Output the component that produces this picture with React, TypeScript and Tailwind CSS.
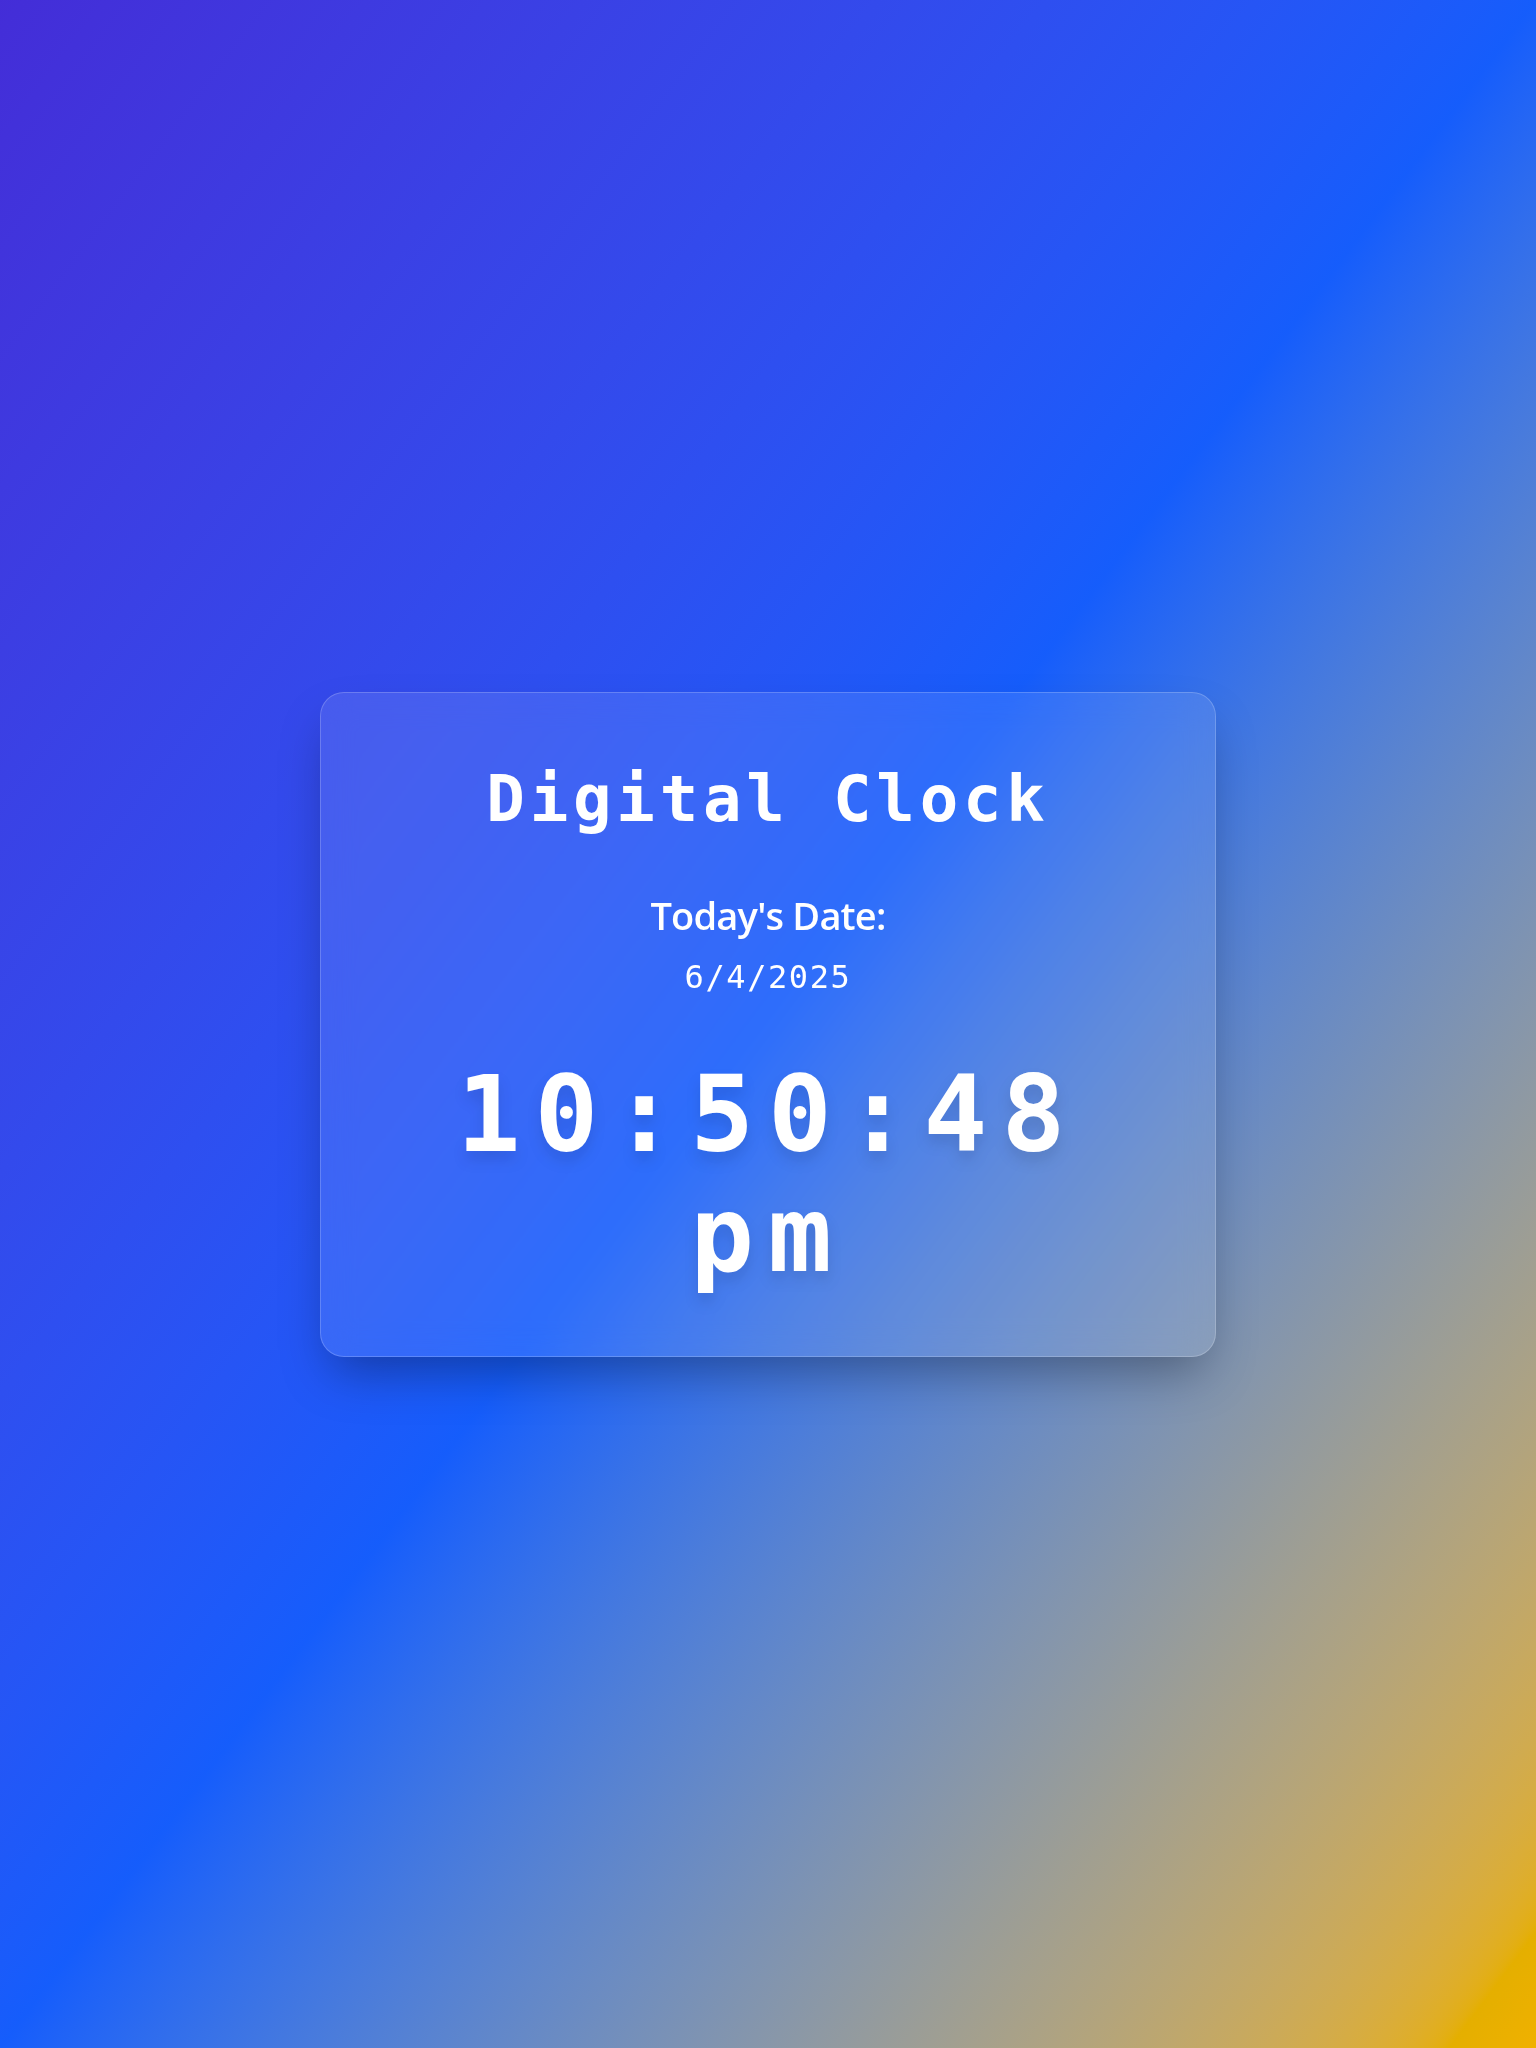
import { useEffect, useState } from "react";

const mono = "font-['DejaVu_Sans_Mono',monospace]";

function formatTime(d: Date) {
  return d
    .toLocaleTimeString("en-US", {
      hour: "2-digit",
      minute: "2-digit",
      second: "2-digit",
      hour12: true,
    })
    .toLowerCase();
}

export default function App() {
  // frozen at the moment of the screenshot
  const [now] = useState(() => new Date(2025, 5, 4, 22, 50, 48));
  const [, setTick] = useState(0);

  useEffect(() => {
    const id = setInterval(() => setTick((t) => t + 1), 1000);
    return () => clearInterval(id);
  }, []);

  const date = `${now.getMonth() + 1}/${now.getDate()}/${now.getFullYear()}`;

  return (
    <div className="flex min-h-screen items-center justify-center bg-linear-to-br from-indigo-700 via-blue-600 to-yellow-500">
      <div className="w-[896px] rounded-3xl border border-white/20 bg-white/10 px-12 pt-[74px] pb-[61px] text-center text-white shadow-[0_25px_50px_-12px_rgba(0,0,0,0.35)] backdrop-blur-lg">
        <h1
          className={`${mono} text-[64px] leading-[64px] font-bold tracking-[4.8px]`}
        >
          Digital Clock
        </h1>

        <div className="mt-[62px]">
          <h2 className="font-['Open_Sans',sans-serif] text-[38px] leading-[44px] font-semibold tracking-[-0.8px]">
            Today's Date:
          </h2>
          <p
            className={`${mono} mt-5 text-[32px] leading-[40px] tracking-[1.6px]`}
          >
            {date}
          </p>
        </div>

        <div
          className={`${mono} mt-[58px] text-[106px] leading-[120px] font-bold tracking-[14px] drop-shadow-xl`}
        >
          {formatTime(now)}
        </div>
      </div>
    </div>
  );
}
